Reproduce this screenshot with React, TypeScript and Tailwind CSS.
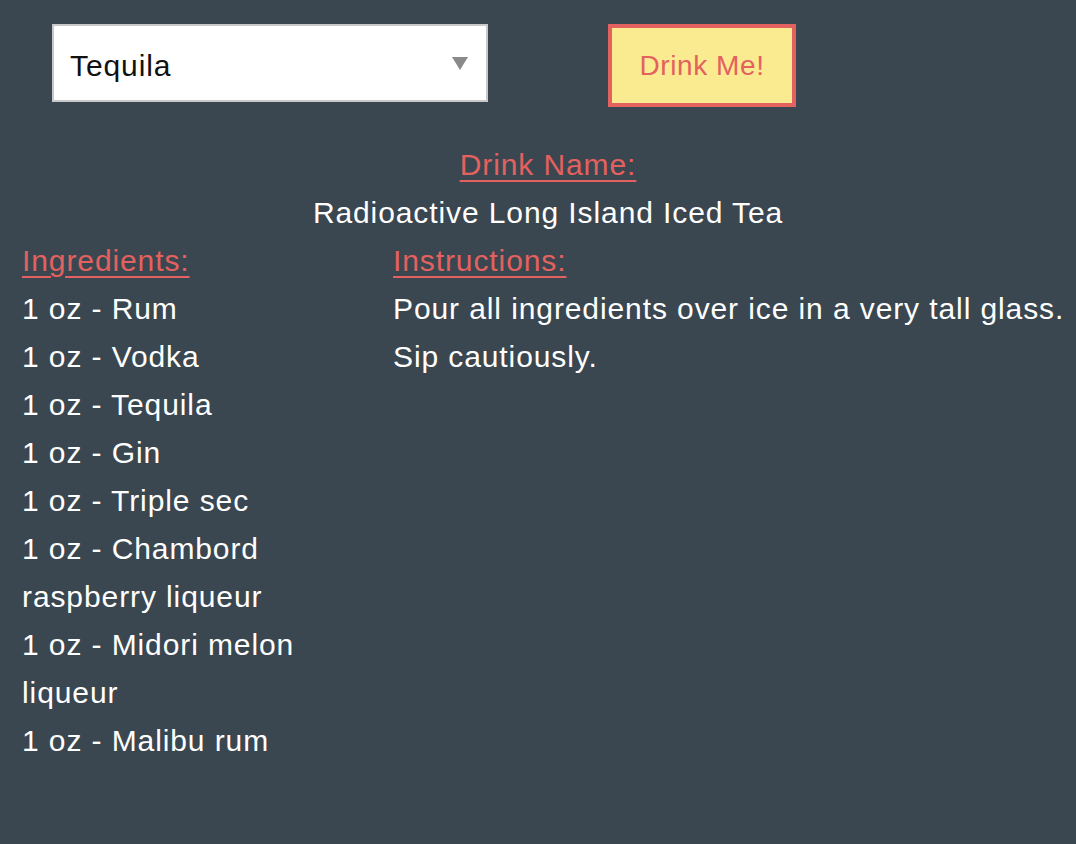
import React from "react";

const ingredients = [
  "1 oz - Rum",
  "1 oz - Vodka",
  "1 oz - Tequila",
  "1 oz - Gin",
  "1 oz - Triple sec",
  "1 oz - Chambord raspberry liqueur",
  "1 oz - Midori melon liqueur",
  "1 oz - Malibu rum",
];

export default function App() {
  return (
    <div
      className="w-[1076px] h-[844px] bg-[#3a4750] text-white overflow-hidden"
      style={{ fontFamily: '"Liberation Sans", Arial, sans-serif' }}
    >
      <div className="flex items-start pt-[24px] pl-[52px]">
        <div className="w-[436px] h-[78px] bg-white border-2 border-[#c9c9c9] flex items-center justify-between pl-[16px] pr-[18px]">
          <span className="text-[30px] tracking-[0.9px] text-[#111] mt-[4px]">Tequila</span>
          <svg width="16" height="13" viewBox="0 0 16 13">
            <polygon points="0,0 16,0 8,13" fill="#8a8a8a" />
          </svg>
        </div>
        <button className="ml-[120px] w-[188px] h-[83px] bg-[#faeb90] border-[4px] border-[#e3615f] text-[#e3615f] text-[28px] tracking-[0.6px] flex items-center justify-center">
          Drink Me!
        </button>
      </div>
      <div className="pl-[20px] pt-[34px] text-[30px] tracking-[0.9px] leading-[48px]">
        <div className="text-center">
          <div className="text-[#e3615f] underline decoration-2 underline-offset-[5px]">Drink Name:</div>
          <div>Radioactive Long Island Iced Tea</div>
        </div>
        <div className="flex pl-[2px]">
          <div className="w-[371px] pr-[30px] shrink-0">
            <div className="text-[#e3615f] underline decoration-2 underline-offset-[5px]">Ingredients:</div>
            {ingredients.map((i) => (
              <div key={i}>{i}</div>
            ))}
          </div>
          <div className="flex-1 pr-[4px]">
            <div className="text-[#e3615f] underline decoration-2 underline-offset-[5px]">Instructions:</div>
            <div>Pour all ingredients over ice in a very tall glass. Sip cautiously.</div>
          </div>
        </div>
      </div>
    </div>
  );
}
